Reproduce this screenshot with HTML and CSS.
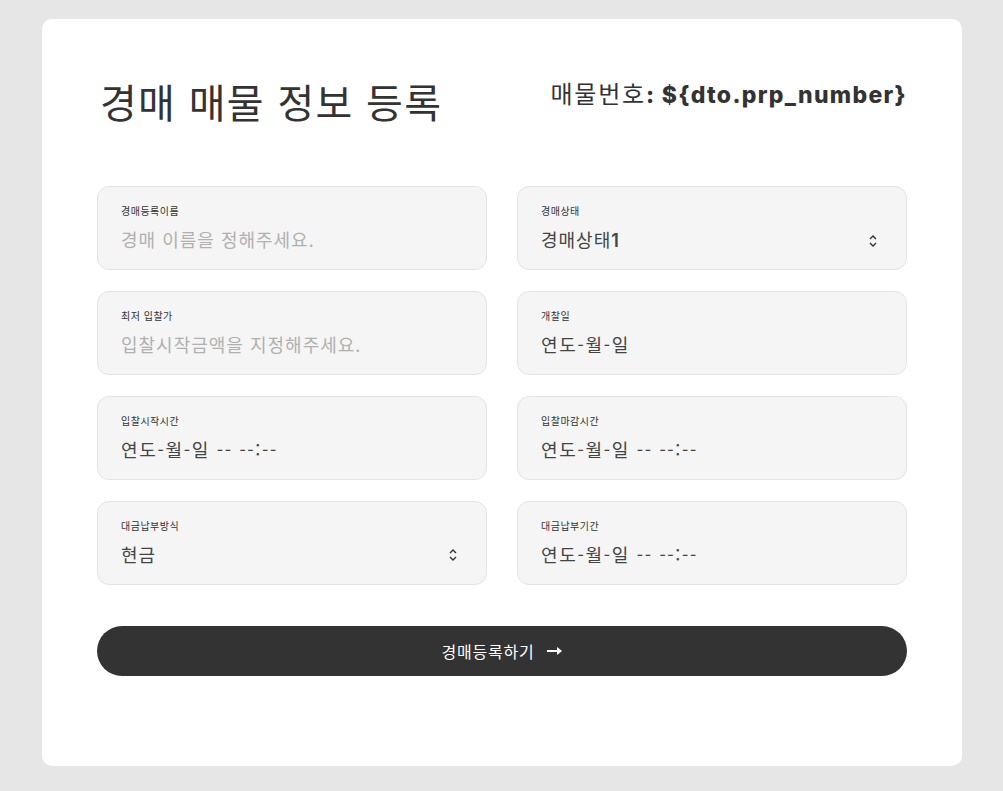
FILE: index.html
```html
<!DOCTYPE html>
<html lang="ko">
<head>
<meta charset="utf-8">
<title>경매 매물 정보 등록</title>
<link rel="stylesheet" href="styles.css">
</head>
<body>
<main class="card">
  <header class="head">
    <h1 class="title">경매 매물 정보 등록</h1>
    <div class="num"><span class="num-label">매물번호</span><b class="num-val">: ${dto.prp_number}</b></div>
  </header>
  <form class="grid">
    <div class="field">
      <span class="label">경매등록이름</span>
      <span class="value ph">경매 이름을 정해주세요.</span>
    </div>
    <div class="field">
      <span class="label">경매상태</span>
      <div class="row"><span class="value">경매상태<span class="lat">1</span></span>
        <svg class="sel" width="10" height="14" viewBox="0 0 10 14"><path d="M2 5 L5 2 L8 5 M2 9 L5 12 L8 9" fill="none" stroke="#333" stroke-width="1.4"/></svg></div>
    </div>
    <div class="field">
      <span class="label">최저 입찰가</span>
      <span class="value ph">입찰시작금액을 지정해주세요.</span>
    </div>
    <div class="field">
      <span class="label">개찰일</span>
      <span class="value date">연도-월-일</span>
    </div>
    <div class="field">
      <span class="label">입찰시작시간</span>
      <span class="value date">연도-월-일 -- --:--</span>
    </div>
    <div class="field">
      <span class="label">입찰마감시간</span>
      <span class="value date">연도-월-일 -- --:--</span>
    </div>
    <div class="field">
      <span class="label">대금납부방식</span>
      <div class="row"><span class="value">현금</span>
        <svg class="sel" width="10" height="14" viewBox="0 0 10 14"><path d="M2 5 L5 2 L8 5 M2 9 L5 12 L8 9" fill="none" stroke="#333" stroke-width="1.4"/></svg></div>
    </div>
    <div class="field">
      <span class="label">대금납부기간</span>
      <span class="value date">연도-월-일 -- --:--</span>
    </div>
  </form>
  <button class="btn" type="button">경매등록하기
    <svg width="16" height="10" viewBox="0 0 16 10"><path d="M0 5 H12" stroke="#fff" stroke-width="2"/><path d="M10 1 L15 5 L10 9 Z" fill="#fff"/></svg>
  </button>
</main>
</body>
</html>
```

FILE: styles.css
```css
* { box-sizing: border-box; }
html, body { margin: 0; }
body {
  background: #e6e6e6;
  font-family: "Noto Sans CJK KR", "Noto Sans", sans-serif;
  color: #333;
  padding: 19px 41px 25px 42px;
}
.card {
  background: #fff;
  border-radius: 10px;
  width: 920px;
  height: 747px;
  padding: 58px 55px 0 55px;
}
.head {
  display: flex;
  justify-content: space-between;
  align-items: center;
  height: 48px;
  margin-bottom: 61px;
}
.title {
  margin: 0 0 0 3px;
  font-size: 40px;
  font-weight: 400;
  line-height: 48px;
  letter-spacing: 1.3px;
  color: #333;
}
.num {
  font-size: 24px;
  line-height: 30px;
  margin-top: -14px;
  color: #333;
}
.num-label { letter-spacing: 1.8px; }
.num-val {
  font-family: "Inter", sans-serif;
  font-weight: 800;
  font-size: 23px;
  letter-spacing: 1.3px;
}
.grid {
  display: grid;
  grid-template-columns: 390px 390px;
  column-gap: 30px;
  row-gap: 21px;
  margin: 0;
}
.field {
  height: 84px;
  background: #f5f5f5;
  border: 1px solid #e3e3e3;
  border-radius: 12px;
  padding: 17px 28px 0 23px;
  display: flex;
  flex-direction: column;
}
.label {
  font-size: 10px;
  line-height: 14px;
  letter-spacing: 0.5px;
  color: #333;
}
.value {
  font-size: 18px;
  line-height: 26px;
  margin-top: 8px;
  letter-spacing: 1px;
  color: #444;
}
.value.ph { color: #b0b0b0; }
.value.date { letter-spacing: 1.7px; }
.lat { font-family: "Inter", sans-serif; font-weight: 600; }
.row {
  display: flex;
  align-items: center;
  justify-content: space-between;
}
.sel { margin-top: 10px; }
.btn {
  margin-top: 41px;
  width: 810px;
  height: 50px;
  border: 0;
  border-radius: 25px;
  background: #333;
  color: #fff;
  font-family: "Noto Sans CJK KR", sans-serif;
  font-size: 16px;
  letter-spacing: 0.8px;
  display: flex;
  align-items: center;
  justify-content: center;
  gap: 12px;
  padding: 0;
}
```
